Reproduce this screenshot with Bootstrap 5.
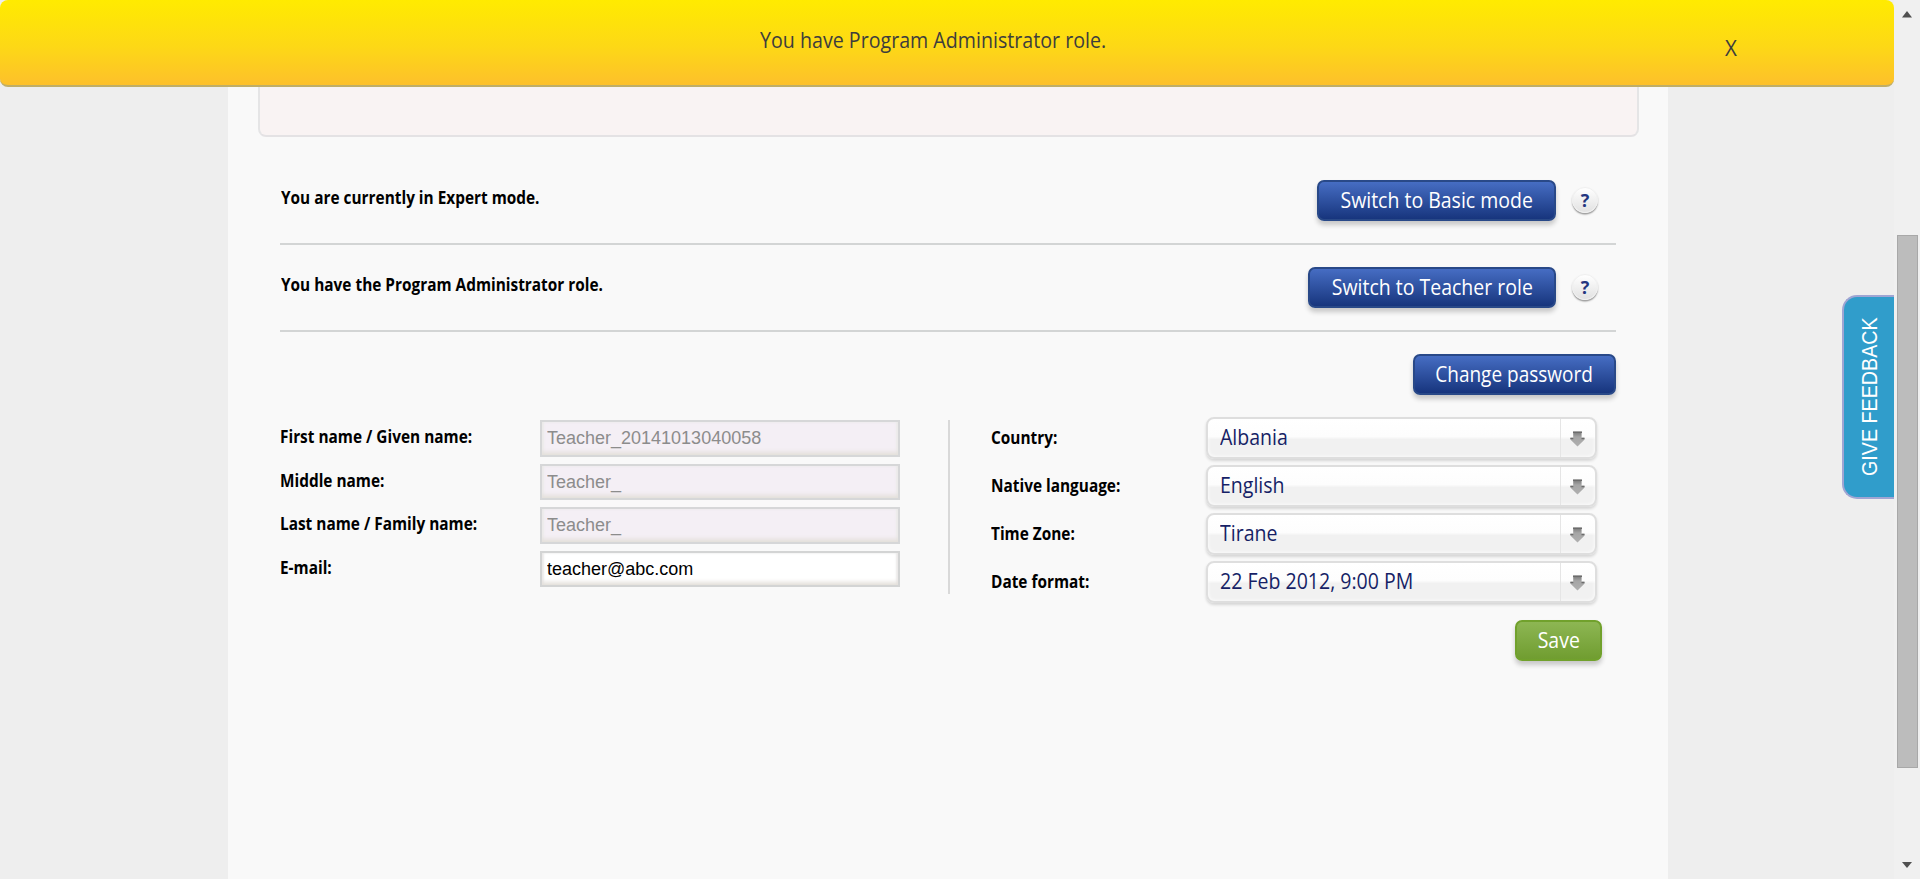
<!DOCTYPE html>
<html lang="en">
<head>
<meta charset="utf-8">
<title>My profile</title>
<link rel="stylesheet" href="https://cdn.jsdelivr.net/npm/bootstrap@5.3.0/dist/css/bootstrap.min.css">
<style>
body{background:#eee;font-family:"Open Sans","Noto Sans",sans-serif;color:#000;height:879px;overflow:hidden}
.shell{height:879px}
.content-area{width:1894px;height:879px}
/* condensed text: sx is the horizontal squeeze */
.sq{display:inline-block;white-space:nowrap;transform:scaleX(var(--sx,.935));transform-origin:0 50%}
.sq-c{transform-origin:50% 50%}
.notice{height:87px;width:1894px;border-radius:8px;background:linear-gradient(#ffeb00,#fdd816 55%,#fdc02b);border-bottom:2px solid #bfae68;color:#3d3d3d;font-size:21px;z-index:5}
.notice-text{height:81px;line-height:81px;width:346px;margin-left:760px}
.notice-close{height:81px;line-height:96px;width:14px;margin-left:618px;border:0;background:none;padding:0;color:inherit}
.sheet{width:1440px;height:792px;margin-left:228px;background:#f9f9f9}
.alert-tail{width:1381px;height:50px;margin-left:30px;background:#f9f3f3;border:2px solid #e5e5e6;border-top:0;border-radius:0 0 8px 8px;border-bottom-color:#e4e2e4}
.profile{width:1336px;margin-left:52px}
.mode-row{height:87px;padding-top:22px;border-bottom:2px solid #d3d5d5}
.mode-row.first-row{height:108px;padding-top:43px}
.fw-label{font-weight:700;font-size:17.3px;--sx:.89}
.mode-row .fw-label{line-height:35px;padding-left:1px}
.btn-glossy{height:41px;border-radius:7px;border:2px solid #294988;padding:0;line-height:35px;font-size:21px;color:#fff;background:linear-gradient(#466dc3,#17357d);box-shadow:0 4px 5px rgba(0,0,0,.2);--sx:.928}
.btn-glossy:hover{color:#fff}
.btn-save{width:87px;height:41px;border-color:#71a12c;background:linear-gradient(#8db653,#709d30);line-height:32px}
.btn-save .sq{position:relative;top:-1px}
.help-dot{width:26px;height:26px;margin:7px 18px 0 16px;border-radius:50%;border:1.5px solid #f0f0f0;background:linear-gradient(#fff,#e2e2e2);box-shadow:0 1.5px 1.5px #999;color:#24367f;font-weight:700;font-size:18px;line-height:25px}
.fields{height:174px}
.left-col{width:670px;border-right:2px solid #d9d9d9}
.field-row{height:43.5px}
.field-row .fw-label{width:260px;line-height:34px}
.form-control.box{width:360px;height:36.5px;border-radius:0;border:2px solid #d3d4d4;padding:1px 5px 0;font:18px "Liberation Sans",Arial,sans-serif;color:#000;background:#fff;box-shadow:inset 0 -5px 4px -2px #e4e0db,inset 2px 0 2px #ecebeb,inset -2px 0 2px #ecebeb}
.form-control.box:disabled{background:#f4eff5;color:#8c8c8c;opacity:1;border-color:#d6d7d8}
.right-col{margin-top:-3px;padding-left:41px}
.pick-row{height:48px}
.pick-row .fw-label{width:215px;line-height:42px}
.picker{width:391px;height:42px;border-radius:8px;border:2px solid #dedede;background:linear-gradient(#fff 0,#fdfdfd 46%,#f1f1f1 54%,#f1f1f1);box-shadow:0 2px 3px rgba(0,0,0,.14),inset 0 0 4px #fff;color:#161f66;font-size:21px;font-weight:400;line-height:36px;padding:0;text-align:left;--sx:.93}
.picker .choice{width:353px;padding-left:12px;border-right:1px solid #e5e5e5}
.picker svg{margin:12px 0 0 9px}
.feedback{width:52px;height:204px;right:0;top:295px;border:2px solid #9fa5d3;border-right:0;border-radius:15px 0 0 15px;background:#309dcb;color:#fff;font:22px "Liberation Sans",Arial,sans-serif}
.feedback span{writing-mode:vertical-rl;transform:rotate(180deg) scaleY(.895);white-space:nowrap;margin-left:2px}
.scroll-track{width:26px;height:879px;background:#f0f0f0;padding:11px 3px 11px 3px}
.scroll-thumb{width:21px;height:533px;margin-top:217px;background:#bcbcbc;border:1px solid #a8a8a8}
</style>
</head>
<body>
<div class="shell d-flex">
  <div class="content-area position-relative">
    <div class="notice d-flex" role="status">
      <div class="notice-text"><span class="sq">You have Program Administrator role.</span></div>
      <button class="notice-close"><span class="sq" style="--sx:.98">X</span></button>
    </div>
    <main class="sheet">
      <div class="alert-tail"></div>
      <div class="profile">
        <div class="mode-row first-row d-flex align-items-start">
          <div class="fw-label flex-grow-1"><span class="sq">You are currently in Expert mode.</span></div>
          <button class="btn btn-glossy" style="width:239px"><span class="sq sq-c">Switch to Basic mode</span></button>
          <span class="help-dot text-center">?</span>
        </div>
        <div class="mode-row d-flex align-items-start">
          <div class="fw-label flex-grow-1"><span class="sq">You have the Program Administrator role.</span></div>
          <button class="btn btn-glossy" style="width:248px"><span class="sq sq-c">Switch to Teacher role</span></button>
          <span class="help-dot text-center">?</span>
        </div>
        <div class="d-flex justify-content-end" style="height:88px;padding-top:22px">
          <button class="btn btn-glossy" style="width:203px;--sx:.905"><span class="sq sq-c">Change password</span></button>
        </div>
        <form>
          <div class="fields d-flex">
            <div class="left-col">
              <div class="field-row d-flex"><label class="fw-label"><span class="sq">First name / Given name:</span></label><input class="form-control box" value="Teacher_20141013040058" disabled></div>
              <div class="field-row d-flex"><label class="fw-label"><span class="sq">Middle name:</span></label><input class="form-control box" value="Teacher_" disabled></div>
              <div class="field-row d-flex"><label class="fw-label"><span class="sq">Last name / Family name:</span></label><input class="form-control box" value="Teacher_" disabled></div>
              <div class="field-row d-flex"><label class="fw-label"><span class="sq">E-mail:</span></label><input class="form-control box" value="teacher@abc.com"></div>
            </div>
            <div class="right-col">
              <div class="pick-row d-flex"><span class="fw-label"><span class="sq">Country:</span></span><button type="button" class="picker d-flex"><span class="choice"><span class="sq">Albania</span></span><svg width="15" height="16"><use href="#arrow"/></svg></button></div>
              <div class="pick-row d-flex"><span class="fw-label"><span class="sq">Native language:</span></span><button type="button" class="picker d-flex"><span class="choice"><span class="sq">English</span></span><svg width="15" height="16"><use href="#arrow"/></svg></button></div>
              <div class="pick-row d-flex"><span class="fw-label"><span class="sq">Time Zone:</span></span><button type="button" class="picker d-flex"><span class="choice"><span class="sq">Tirane</span></span><svg width="15" height="16"><use href="#arrow"/></svg></button></div>
              <div class="pick-row d-flex"><span class="fw-label"><span class="sq">Date format:</span></span><button type="button" class="picker d-flex"><span class="choice"><span class="sq">22 Feb 2012, 9:00 PM</span></span><svg width="15" height="16"><use href="#arrow"/></svg></button></div>
            </div>
          </div>
          <div class="d-flex justify-content-end" style="padding:26px 14px 0 0">
            <button type="button" class="btn btn-glossy btn-save"><span class="sq sq-c">Save</span></button>
          </div>
        </form>
      </div>
    </main>
    <div class="feedback position-absolute d-flex align-items-center justify-content-center"><span>GIVE FEEDBACK</span></div>
  </div>
  <div class="scroll-track d-flex flex-column">
    <svg class="flex-shrink-0" width="20" height="7"><path d="M5 6.5 10 0l5 6.5z" fill="#505050"/></svg>
    <div class="scroll-thumb flex-shrink-0"></div>
    <svg class="mt-auto flex-shrink-0" width="20" height="6"><path d="M5 0h10l-5 6z" fill="#505050"/></svg>
  </div>
</div>
<svg width="0" height="0" class="position-absolute">
  <defs>
    <linearGradient id="ag" x1="0" y1="0" x2="0" y2="1"><stop offset="0" stop-color="#777"/><stop offset=".35" stop-color="#a5a5a5"/><stop offset="1" stop-color="#b0b0b0"/></linearGradient>
    <symbol id="arrow" viewBox="0 0 15 16"><path d="M3.2 .8h8.4v6h2.8v2L7.5 15.5.6 8.8v-2h2.6z" fill="url(#ag)"/><path d="M3 1.3h9M.3 7.5h3M11.5 7.5h3" stroke="#6c6c6c" stroke-width="1.4"/></symbol>
  </defs>
</svg>
<script src="https://cdn.jsdelivr.net/npm/bootstrap@5.3.0/dist/js/bootstrap.bundle.min.js"></script>
</body>
</html>
